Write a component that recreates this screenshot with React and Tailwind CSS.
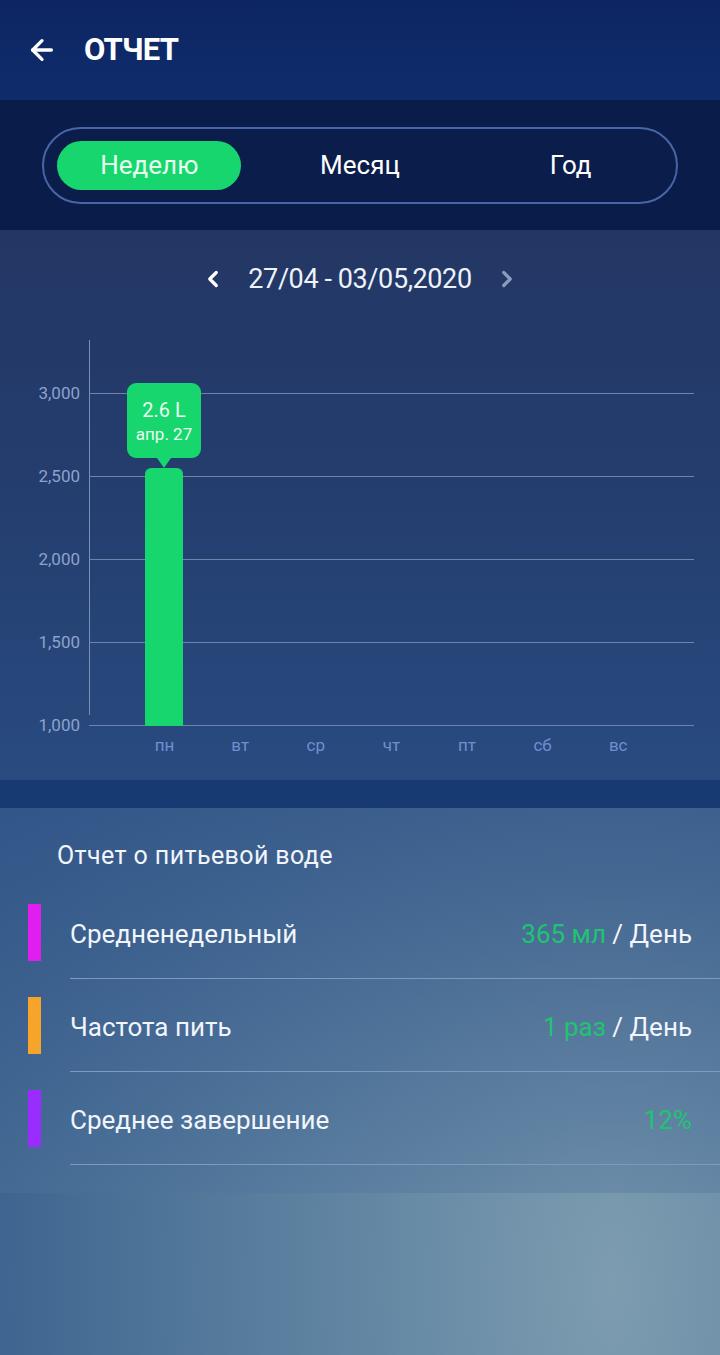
import React from 'react'
import { ArrowLeft, ChevronLeft, ChevronRight } from 'lucide-react'

const yTicks = ['3,000', '2,500', '2,000', '1,500', '1,000']
const days = ['пн', 'вт', 'ср', 'чт', 'пт', 'сб', 'вс']

const rows = [
  { label: 'Средненедельный', value: '365 мл', unit: ' / День', bar: 'bg-[#e11ef0]' },
  { label: 'Частота пить', value: '1 раз', unit: ' / День', bar: 'bg-[#f7a52a]' },
  { label: 'Среднее завершение', value: '12%', unit: '', bar: 'bg-[#9a2cff]' },
]

export default function App() {
  return (
    <div className="w-[720px] h-[1355px] overflow-hidden flex flex-col text-white font-['Roboto',sans-serif] bg-[radial-gradient(ellipse_at_85%_95%,#7d9cb0_0%,#5d82a0_35%,#3f6690_70%,#2d5284_100%)]">

      {/* Header */}
      <div className="h-[100px] shrink-0 flex items-center pl-[26px] gap-[26px] bg-[linear-gradient(180deg,#0d2663,#0f2c6b)]">
        <ArrowLeft className="w-[32px] h-[32px] text-white" strokeWidth={2.5} />
        <h1 className="text-[31px] font-bold tracking-[-0.8px]">ОТЧЕТ</h1>
      </div>

      {/* Period toggle */}
      <div className="h-[130px] shrink-0 flex items-center px-[42px] bg-[#0a1c4a]">
        <div className="w-full h-[77px] rounded-full border-2 border-[#4866a6] bg-[#0b1d4b] grid grid-cols-3 items-center">
          <div className="flex justify-center">
            <div className="w-[184px] h-[49px] rounded-full bg-[#17d66d] flex items-center justify-center text-[26px] text-[#e8fff0]">Неделю</div>
          </div>
          <div className="text-center text-[26px]">Месяц</div>
          <div className="text-center text-[26px]">Год</div>
        </div>
      </div>

      {/* Chart */}
      <div className="h-[550px] shrink-0 bg-[linear-gradient(180deg,#233764_0%,#243e6f_50%,#294b80_100%)] flex flex-col">
        <div className="h-[100px] flex items-center justify-center gap-[22px] pb-[2px]">
          <ChevronLeft className="w-[26px] h-[26px] text-white" strokeWidth={3} />
          <span className="text-[27px] tracking-[-0.4px] text-[#eef2fb]">27/04 - 03/05,2020</span>
          <ChevronRight className="w-[26px] h-[26px] text-[#8b9bbd]" strokeWidth={3} />
        </div>

        <div className="relative h-[410px] ml-[89px] mr-[26px] mt-[10px]">
          {/* y axis */}
          <div className="absolute left-0 top-0 bottom-[35px] w-px bg-[#7d8fb5]" />
          {/* grid lines + labels */}
          <div className="absolute left-0 right-0 top-[53px] h-[333px] flex flex-col justify-between">
            {yTicks.map(t => (
              <div key={t} className="relative h-px bg-[#6f84ad]">
                <span className="absolute right-[calc(100%+9px)] -top-[11px] text-[17px] text-[#8da2cd] leading-[22px]">{t}</span>
              </div>
            ))}
          </div>

          {/* bar */}
          <div className="absolute left-[56px] w-[38px] top-[128px] h-[258px] rounded-t-[6px] bg-[#17d66d]" />

          {/* tooltip */}
          <div className="absolute left-[38px] top-[43px] w-[74px] flex flex-col items-center">
            <div className="w-[74px] h-[75px] rounded-[9px] bg-[#17d66d] flex flex-col items-center justify-center">
              <span className="text-[20px] leading-[26px] text-[#eafff1]">2.6 L</span>
              <span className="text-[17px] leading-[22px] text-[#eafff1]">апр. 27</span>
            </div>
            <div className="w-0 h-0 border-l-[7px] border-r-[7px] border-t-[10px] border-l-transparent border-r-transparent border-t-[#17d66d]" />
          </div>

          {/* x labels */}
          <div className="absolute left-0 right-0 top-[394px]">
            {days.map((d, i) => (
              <span key={d} className="absolute -translate-x-1/2 text-[17px] text-[#6f8fd0] leading-[22px]" style={{ left: `${(i + 1) * 75.6}px` }}>{d}</span>
            ))}
          </div>
        </div>
      </div>

      {/* Divider band */}
      <div className="h-[28px] shrink-0 bg-[#183a72]" />

      {/* Report */}
      <div className="h-[385px] shrink-0 bg-[linear-gradient(180deg,rgba(45,80,133,0.7),rgba(80,115,155,0.35))] pt-[30px]">
        <p className="pl-[57px] text-[25px] tracking-[0.4px] text-[#f2f5fb] leading-[36px]">Отчет о питьевой воде</p>
        <div className="mt-[12px]">
          {rows.map(r => (
            <div key={r.label} className="flex items-center h-[93px]">
              <div className={`w-[13px] h-[57px] ml-[28px] ${r.bar}`} />
              <div className="flex-1 ml-[29px] h-full flex items-center justify-between pr-[28px] pt-[4px] border-b border-[#7d9bc0]">
                <span className="text-[26px] text-[#f2f5fb]">{r.label}</span>
                <span className="text-[26px]">
                  <span className="text-[#1fc472]">{r.value}</span>
                  <span className="text-[#f2f5fb]">{r.unit}</span>
                </span>
              </div>
            </div>
          ))}
        </div>
      </div>

      <div className="flex-1" />
    </div>
  )
}
